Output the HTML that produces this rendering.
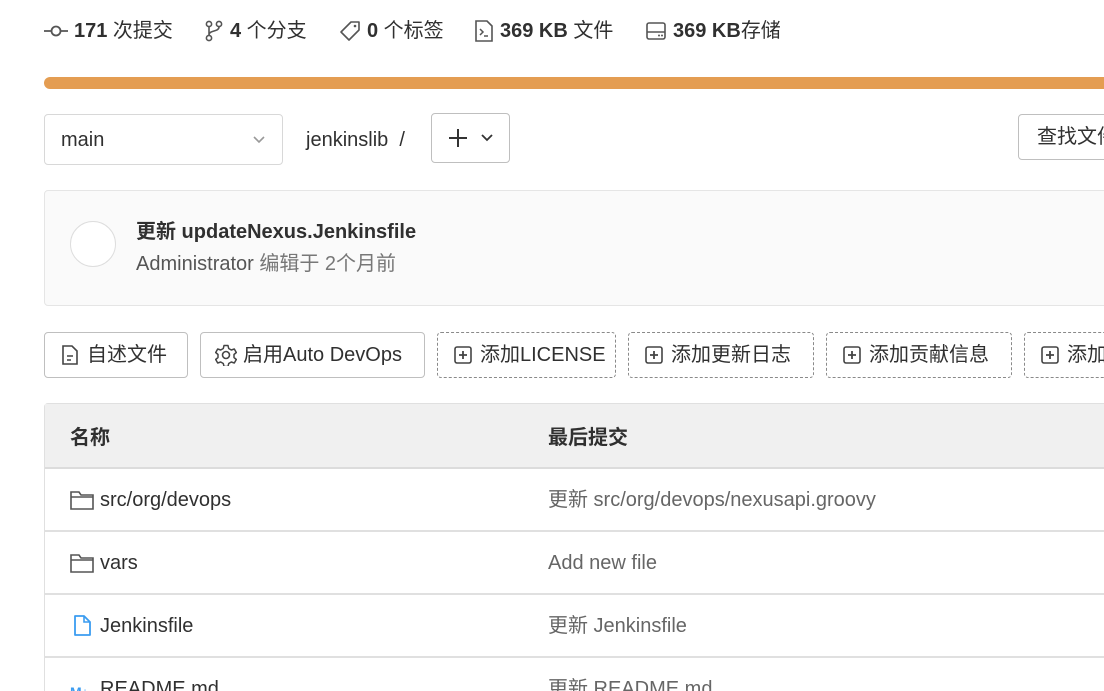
<!DOCTYPE html>
<html><head><meta charset="utf-8"><style>
html,body{margin:0;width:1104px;height:691px;overflow:hidden}
body{background:#fff;font-family:"Liberation Sans","Noto Sans CJK SC",sans-serif;color:#303030;font-size:20px;line-height:24px;position:relative}
#w{position:absolute;left:0;top:0;width:1104px;height:691px;overflow:hidden}
.a{position:absolute;white-space:nowrap}
.stat{top:19px;height:24px;display:flex;align-items:center;gap:6px}
svg{display:block}
.btn{position:absolute;top:332px;height:46px;border:1px solid #bfbfbf;border-radius:4px;display:flex;align-items:center;padding:0 0 0 16px;box-sizing:border-box;gap:8px;color:#303030;overflow:hidden}
.dash{border:1px dashed #8a8a8a}
.row{position:absolute;left:45px;width:1070px;border-bottom:2px solid #e0e0e0;box-sizing:border-box}
.t{color:#303030}
</style></head><body><div id="w">
<div class="a stat" style="left:44px"><svg width="24" height="16" viewBox="0 0 24 16"><circle cx="12" cy="8" r="4.5" fill="none" stroke="#555" stroke-width="1.8"/><path d="M0 8h7M17 8h7" stroke="#555" stroke-width="1.8"/></svg><span><b>171</b> 次提交</span></div>
<div class="a stat" style="left:204px"><svg width="20" height="22" viewBox="0 0 20 22"><circle cx="5" cy="4" r="2.6" fill="none" stroke="#555" stroke-width="1.6"/><circle cx="15" cy="4" r="2.6" fill="none" stroke="#555" stroke-width="1.6"/><circle cx="5" cy="18" r="2.6" fill="none" stroke="#555" stroke-width="1.6"/><path d="M5 7v8M15 7c0 5-10 3-10 8" fill="none" stroke="#555" stroke-width="1.6"/></svg><span><b>4</b> 个分支</span></div>
<div class="a stat" style="left:339px"><svg width="22" height="22" viewBox="0 0 22 22"><path d="M12 2h8v8L10 20 2 12z" fill="none" stroke="#555" stroke-width="1.6" stroke-linejoin="round"/><circle cx="16" cy="6" r="1.3" fill="#555"/></svg><span><b>0</b> 个标签</span></div>
<div class="a stat" style="left:474px"><svg width="20" height="24" viewBox="0 0 20 24"><path d="M2 2h11l5 5v15H2z" fill="none" stroke="#555" stroke-width="1.6"/><path d="M6 10l3 3-3 3M10 17h4" fill="none" stroke="#555" stroke-width="1.5"/></svg><span><b>369 KB</b> 文件</span></div>
<div class="a stat" style="left:645px"><svg width="22" height="22" viewBox="0 0 22 22"><rect x="2" y="3" width="18" height="16" rx="2" fill="none" stroke="#555" stroke-width="1.6"/><path d="M2 12h18" stroke="#555" stroke-width="1.6"/><circle cx="14" cy="15.5" r="1" fill="#555"/><circle cx="17" cy="15.5" r="1" fill="#555"/></svg><span><b>369 KB</b>存储</span></div>

<div class="a" style="left:44px;top:77px;width:1080px;height:12px;border-radius:6px;background:#e49d52"></div>

<div class="a" style="left:44px;top:114px;width:239px;height:51px;border:1px solid #d8d8d8;border-radius:4px;box-sizing:border-box;display:flex;align-items:center;padding-left:16px">main<svg style="position:absolute;right:16px;top:20px" width="14" height="10" viewBox="0 0 14 10"><path d="M2 2l5 5 5-5" fill="none" stroke="#999" stroke-width="1.6"/></svg></div>
<div class="a" style="left:306px;top:128px">jenkinslib &nbsp;/</div>
<div class="a" style="left:431px;top:113px;width:79px;height:50px;border:1px solid #bfbfbf;border-radius:4px;box-sizing:border-box;display:flex;align-items:center;justify-content:center;gap:12px"><svg width="20" height="20" viewBox="0 0 20 20"><path d="M10 1v18M1 10h18" stroke="#333" stroke-width="2"/></svg><svg width="14" height="10" viewBox="0 0 14 10"><path d="M2 2l5 5 5-5" fill="none" stroke="#333" stroke-width="1.8"/></svg></div>
<div class="a" style="left:1018px;top:114px;width:120px;height:46px;border:1px solid #bfbfbf;border-radius:4px;box-sizing:border-box;padding:10px 0 0 18px">查找文件</div>

<div class="a" style="left:44px;top:190px;width:1080px;height:116px;background:#fafafa;border:1px solid #e5e5e5;border-radius:4px;box-sizing:border-box"></div>
<div class="a" style="left:70px;top:221px;width:46px;height:46px;border-radius:50%;border:1px solid #ddd;background:#fff;box-sizing:border-box"></div>
<div class="a" style="left:136px;top:220px;font-weight:700">更新 updateNexus.Jenkinsfile</div>
<div class="a" style="left:136px;top:252px;color:#555">Administrator <span style="color:#777">编辑于 2个月前</span></div>

<div class="btn" style="left:44px;width:144px"><svg width="18" height="22" viewBox="0 0 18 22"><path d="M2 2h9l5 5v13H2z" fill="none" stroke="#444" stroke-width="1.6"/><path d="M6 12h6M6 16h4" stroke="#444" stroke-width="1.6"/></svg>自述文件</div>
<div class="btn" style="left:200px;width:225px;padding-left:14px;gap:6px"><svg width="22" height="22" viewBox="0 0 22 22"><circle cx="11" cy="11" r="3.5" fill="none" stroke="#444" stroke-width="1.6"/><path d="M9 1.5h4l.7 3 2.6 1.5 3-1 2 3.5-2.3 2v3l2.3 2-2 3.5-3-1-2.6 1.5-.7 3H9l-.7-3-2.6-1.5-3 1-2-3.5 2.3-2v-3l-2.3-2 2-3.5 3 1L8.3 4.5z" fill="none" stroke="#444" stroke-width="1.5" stroke-linejoin="round"/></svg>启用Auto DevOps</div>
<div class="btn dash" style="left:437px;width:179px"><svg width="18" height="18" viewBox="0 0 18 18"><rect x="1" y="1" width="16" height="16" rx="2" fill="none" stroke="#444" stroke-width="1.6"/><path d="M9 5v8M5 9h8" stroke="#444" stroke-width="1.8"/></svg>添加LICENSE</div>
<div class="btn dash" style="left:628px;width:186px"><svg width="18" height="18" viewBox="0 0 18 18"><rect x="1" y="1" width="16" height="16" rx="2" fill="none" stroke="#444" stroke-width="1.6"/><path d="M9 5v8M5 9h8" stroke="#444" stroke-width="1.8"/></svg>添加更新日志</div>
<div class="btn dash" style="left:826px;width:186px"><svg width="18" height="18" viewBox="0 0 18 18"><rect x="1" y="1" width="16" height="16" rx="2" fill="none" stroke="#444" stroke-width="1.6"/><path d="M9 5v8M5 9h8" stroke="#444" stroke-width="1.8"/></svg>添加贡献信息</div>
<div class="btn dash" style="left:1024px;width:186px"><svg width="18" height="18" viewBox="0 0 18 18"><rect x="1" y="1" width="16" height="16" rx="2" fill="none" stroke="#444" stroke-width="1.6"/><path d="M9 5v8M5 9h8" stroke="#444" stroke-width="1.8"/></svg>添加贡献信息</div>

<div class="a" style="left:44px;top:403px;width:1080px;height:300px;border:1px solid #e0e0e0;border-radius:4px;box-sizing:border-box"></div>
<div class="row" style="top:404px;height:65px;background:#f0f0f0;border-bottom-color:#dcdcdc"></div>
<div class="a" style="left:70px;top:426px;font-weight:700">名称</div>
<div class="a" style="left:548px;top:426px;font-weight:700">最后提交</div>
<div class="row" style="top:469px;height:63px"></div>
<div class="row" style="top:532px;height:63px"></div>
<div class="row" style="top:595px;height:63px"></div>
<svg class="a" style="left:70px;top:490px" width="24" height="20" viewBox="0 0 24 20"><path d="M1 2h8l2 3h12v14H1z" fill="none" stroke="#555" stroke-width="1.6"/><path d="M1 7h22" stroke="#555" stroke-width="1.4"/></svg>
<div class="a" style="left:100px;top:488px">src/org/devops</div>
<div class="a" style="left:548px;top:488px;color:#666">更新 src/org/devops/nexusapi.groovy</div>
<svg class="a" style="left:70px;top:553px" width="24" height="20" viewBox="0 0 24 20"><path d="M1 2h8l2 3h12v14H1z" fill="none" stroke="#555" stroke-width="1.6"/><path d="M1 7h22" stroke="#555" stroke-width="1.4"/></svg>
<div class="a" style="left:100px;top:551px">vars</div>
<div class="a" style="left:548px;top:551px;color:#666">Add new file</div>
<svg class="a" style="left:74px;top:615px" width="17" height="21" viewBox="0 0 17 21"><path d="M1 1h9l6 6v13H1z" fill="none" stroke="#3b9cf0" stroke-width="1.8" stroke-linejoin="round"/><path d="M10 1v6h6" fill="none" stroke="#3b9cf0" stroke-width="1.6"/></svg>
<div class="a" style="left:100px;top:614px">Jenkinsfile</div>
<div class="a" style="left:548px;top:614px;color:#666">更新 Jenkinsfile</div>
<div class="a" style="left:70px;top:680px;color:#3b9cf0;font-size:14px;font-weight:700">M↓</div>
<div class="a" style="left:100px;top:677px">README.md</div>
<div class="a" style="left:548px;top:677px;color:#666">更新 README.md</div>
</div></body></html>
